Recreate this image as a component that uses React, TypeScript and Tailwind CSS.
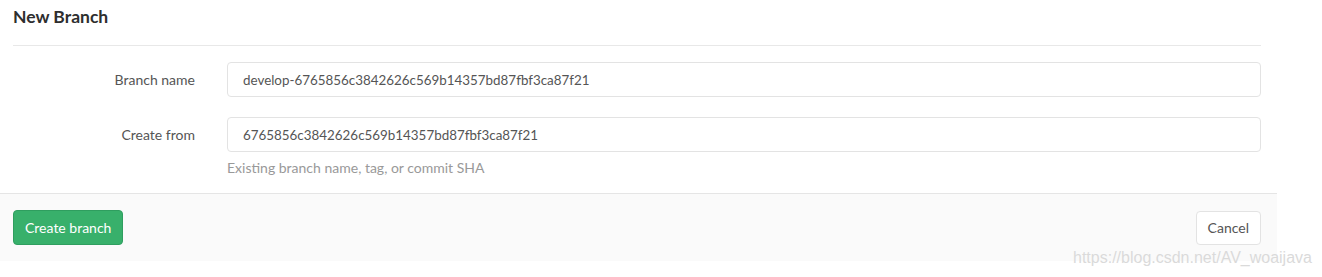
export default function App() {
  return (
    <div className="relative h-[277px] w-[1322px] bg-white font-['Lato',sans-serif] text-[#2e2e2e]">
      <div className="w-[1277px]">
        <div className="pl-[13px] pr-[16px]">
          <h3 className="h-[46px] border-b border-[#e8e8e8] pt-[7px] text-[17.5px] font-bold leading-[20px]">
            New Branch
          </h3>
          <div className="pt-[16px]">
            <div className="flex items-center">
              <label className="w-[182px] text-right text-[14px] text-[#555]">Branch name</label>
              <input
                readOnly
                value="develop-6765856c3842626c569b14357bd87fbf3ca87f21"
                className="ml-[32px] h-[35px] flex-1 rounded-[4px] border border-[#e3e3e3] px-[15px] text-[13.4px] text-[#555] outline-none"
              />
            </div>
            <div className="mt-[20px] flex items-center">
              <label className="w-[182px] text-right text-[14px] text-[#555]">Create from</label>
              <input
                readOnly
                value="6765856c3842626c569b14357bd87fbf3ca87f21"
                className="ml-[32px] h-[35px] flex-1 rounded-[4px] border border-[#e3e3e3] px-[15px] text-[13.4px] text-[#555] outline-none"
              />
            </div>
            <p className="ml-[214px] mt-[7px] text-[14px] leading-[18px] text-[#999]">
              Existing branch name, tag, or commit SHA
            </p>
          </div>
        </div>
        <div className="mt-[16px] flex h-[68px] items-center justify-between border-t border-[#e5e5e5] bg-[#fafafa] pl-[13px] pr-[16px]">
          <button className="h-[35px] rounded-[4px] border border-[#2f9e5f] bg-[#38b06b] px-[11px] text-[14px] text-white">
            Create branch
          </button>
          <button className="h-[34px] rounded-[4px] border border-[#e3e3e3] bg-white px-[11px] text-[14px] text-[#555]">
            Cancel
          </button>
        </div>
      </div>
      <span className="absolute left-[1073px] top-[248px] font-['Liberation_Sans',sans-serif] text-[16px] leading-[20px] text-[#dadada]">
        https://blog.csdn.net/AV_woaijava
      </span>
    </div>
  );
}
